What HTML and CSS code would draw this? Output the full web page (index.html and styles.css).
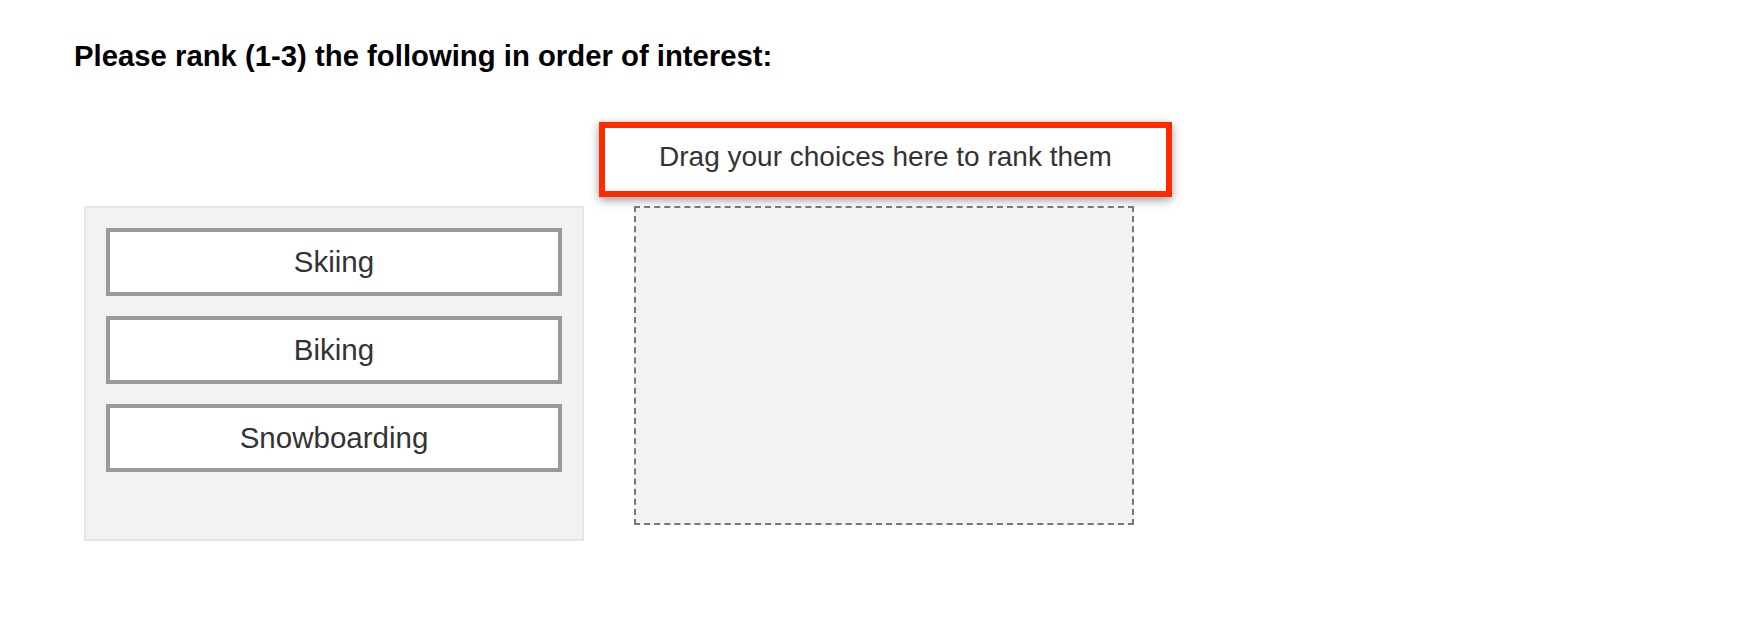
FILE: index.html
```html
<!DOCTYPE html>
<html lang="en">
<head>
<meta charset="utf-8">
<title>Rank</title>
<link rel="stylesheet" href="styles.css">
</head>
<body>
<main class="page">
  <h1 class="question">Please rank (1-3) the following in order of interest:</h1>
  <div class="rank-grid">
    <div class="drop-label">Drag your choices here to rank them</div>
    <div class="choices">
      <div class="choice">Skiing</div>
      <div class="choice">Biking</div>
      <div class="choice">Snowboarding</div>
    </div>
    <div class="dropzone"></div>
  </div>
</main>
</body>
</html>
```
FILE: styles.css
```css
html, body {
  margin: 0;
  padding: 0;
  background: #fff;
}
body {
  font-family: "Liberation Sans", Arial, Helvetica, sans-serif;
}
.page {
  padding: 40px 0 0 74px;
}
.question {
  margin: 0;
  font-size: 29.3px;
  line-height: 32px;
  font-weight: bold;
  color: #000;
}
.rank-grid {
  margin: 50px 0 0 10px;
  display: grid;
  grid-template-columns: 500px 500px;
  column-gap: 50px;
  row-gap: 9px;
  align-items: start;
}
.drop-label {
  grid-column: 2;
  grid-row: 1;
  box-sizing: border-box;
  width: 573px;
  margin-left: -35px;
  border: 6px solid #ff2a00;
  padding: 13px 0 18px;
  font-size: 28px;
  line-height: 32px;
  color: #333;
  text-align: center;
  background: #fff;
  box-shadow: 0 3px 9px rgba(0, 0, 0, 0.4);
}
.choices {
  grid-column: 1;
  grid-row: 2;
  box-sizing: border-box;
  height: 335px;
  border: 2px solid #e6e6e6;
  background: #f2f2f2;
  padding: 20px;
  display: flex;
  flex-direction: column;
  gap: 20px;
}
.choice {
  box-sizing: border-box;
  height: 68px;
  border: 4px solid #999;
  background: #fff;
  padding: 14px 0 14px;
  font-size: 29.5px;
  line-height: 32px;
  color: #333;
  text-align: center;
}
.dropzone {
  grid-column: 2;
  grid-row: 2;
  box-sizing: border-box;
  height: 319px;
  border: 2px dashed #777;
  background: #f2f2f2;
}
```
